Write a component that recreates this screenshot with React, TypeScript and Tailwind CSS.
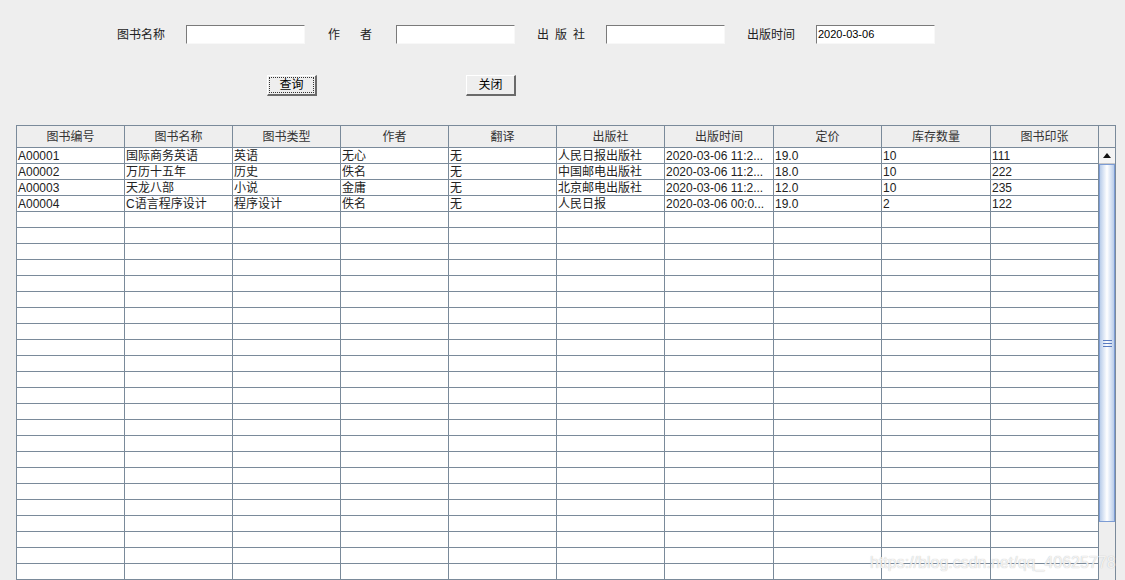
import React from 'react';

const font = { fontFamily: '"Liberation Sans", "Noto Sans CJK SC", sans-serif' };

const columns = ['图书编号', '图书名称', '图书类型', '作者', '翻译', '出版社', '出版时间', '定价', '库存数量', '图书印张'];

const books = [
  ['A00001', '国际商务英语', '英语', '无心', '无', '人民日报出版社', '2020-03-06 11:2...', '19.0', '10', '111'],
  ['A00002', '万历十五年', '历史', '佚名', '无', '中国邮电出版社', '2020-03-06 11:2...', '18.0', '10', '222'],
  ['A00003', '天龙八部', '小说', '金庸', '无', '北京邮电出版社', '2020-03-06 11:2...', '12.0', '10', '235'],
  ['A00004', 'C语言程序设计', '程序设计', '佚名', '无', '人民日报', '2020-03-06 00:0...', '19.0', '2', '122'],
];

const gridCols = 'grid grid-cols-[108px_108px_108px_108px_108px_108px_109px_108px_109px_108px]';

function Field({ value = '' }: { value?: string }) {
  return (
    <div className="w-[119px] h-[19px] bg-white border-t border-l border-t-[#7a7a7a] border-l-[#7a7a7a] border-b border-r border-b-[#f8f8f8] border-r-[#f8f8f8] flex items-center pl-[1px] text-[11px] text-black leading-none">
      {value}
    </div>
  );
}

function Btn({ label, focused }: { label: string; focused?: boolean }) {
  return (
    <div className="w-[50px] h-[21px] bg-[#eeeeee] border-t border-l border-t-white border-l-white border-b-2 border-r-2 border-b-[#6a6a6a] border-r-[#6a6a6a] flex items-center justify-center p-[2px]">
      <div
        className={
          'w-full h-full flex items-center justify-center text-[12px] text-black leading-none ' +
          (focused ? 'outline outline-1 outline-dotted outline-[#333]' : '')
        }
      >
        {label}
      </div>
    </div>
  );
}

export default function App() {
  const emptyRows = Array.from({ length: 26 });

  return (
    <div className="w-[1125px] h-[580px] bg-[#eeeeee] overflow-hidden relative" style={font}>
      {/* search bar */}
      <div className="flex items-center h-[19px] mt-[25px] pl-[117px] text-[12px] text-[#222]">
        <span className="w-[48px]">图书名称</span>
        <div className="ml-[21px]">
          <Field />
        </div>
        <span className="ml-[23px] w-[44px] flex justify-between">
          <span>作</span>
          <span>者</span>
        </span>
        <div className="ml-[24px]">
          <Field />
        </div>
        <span className="ml-[22px] w-[48px] flex justify-between">
          <span>出</span>
          <span>版</span>
          <span>社</span>
        </span>
        <div className="ml-[21px]">
          <Field />
        </div>
        <span className="ml-[22px] w-[48px]">出版时间</span>
        <div className="ml-[21px]">
          <Field value="2020-03-06" />
        </div>
      </div>

      <div className="flex mt-[31px]">
        <div className="ml-[267px]">
          <Btn label="查询" focused />
        </div>
        <div className="ml-[149px]">
          <Btn label="关闭" />
        </div>
      </div>

      {/* table */}
      <div className="flex ml-[16px] mt-[29px] w-[1100px]">
        <div className="border-l border-t border-[#7a8a9a]">
          <div className={gridCols + ' h-[22px] bg-[#eeeeee]'}>
            {columns.map((c) => (
              <div
                key={c}
                className="border-r border-b border-[#7a8a9a] flex items-center justify-center text-[12px] text-[#333] leading-none"
              >
                {c}
              </div>
            ))}
          </div>
          {books.map((row) => (
            <div key={row[0]} className={gridCols + ' h-[16px] bg-white'}>
              {row.map((v, i) => (
                <div
                  key={i}
                  className="border-r border-b border-[#7a8a9a] flex items-center pl-[1px] text-[12px] text-[#222] leading-none whitespace-nowrap overflow-hidden"
                >
                  {v}
                </div>
              ))}
            </div>
          ))}
          {emptyRows.map((_, r) => (
            <div key={r} className={gridCols + ' h-[16px] bg-white'}>
              {columns.map((c) => (
                <div key={c} className="border-r border-b border-[#7a8a9a]" />
              ))}
            </div>
          ))}
        </div>

        {/* scrollbar */}
        <div className="w-[17px] flex flex-col border-t border-r border-[#7a8a9a]">
          <div className="h-[22px] bg-[#eeeeee] border-b border-[#7a8a9a]" />
          <div className="h-[16px] bg-[#f4f4f4] border-b border-[#c8c8c8] flex items-center justify-center">
            <svg width="8" height="5" viewBox="0 0 8 5">
              <polygon points="4,0 8,5 0,5" fill="#111" />
            </svg>
          </div>
          <div className="h-[358px] border border-[#7c9cd4] bg-gradient-to-r from-[#b9cdea] via-white to-[#b9cdea] flex flex-col items-center justify-center gap-[2px]">
            <div className="w-[9px] h-[1px] bg-[#5a7cc0]" />
            <div className="w-[9px] h-[1px] bg-[#5a7cc0]" />
            <div className="w-[9px] h-[1px] bg-[#5a7cc0]" />
          </div>
          <div className="flex-1 bg-[#eeeeee]" />
        </div>
      </div>

      <div className="absolute left-[870px] top-[551px] text-[16px] text-white/80 [text-shadow:0_0_1px_#b0b0b0] pointer-events-none">
        https://blog.csdn.net/qq_40625778
      </div>
    </div>
  );
}
